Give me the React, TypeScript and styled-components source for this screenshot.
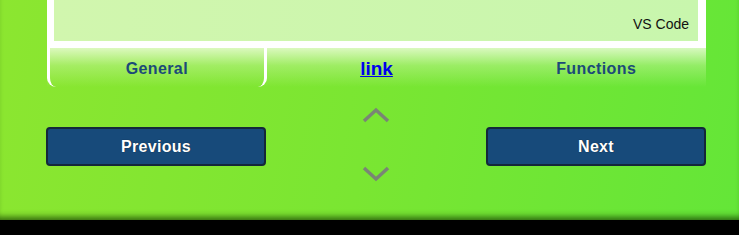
import React from 'react';
import styled, { createGlobalStyle } from 'styled-components';

const GlobalStyle = createGlobalStyle`
  html, body {
    margin: 0;
    padding: 0;
    background: #000;
  }
  body {
    font-family: 'Liberation Sans', Arial, sans-serif;
  }
`;

const tabs = ['General', 'link', 'Functions'];

const Chevron = ({ dir }: { dir: 'up' | 'down' }) => (
  <svg width="28" height="16" viewBox="0 0 28 16">
    <polyline
      points={dir === 'up' ? '2,14 14,3 26,14' : '2,2 14,13 26,2'}
      fill="none"
      stroke="#7a8575"
      strokeWidth="3.5"
    />
  </svg>
);

const App = () => {
  return (
    <>
      <GlobalStyle />
      <StyledPage>
        <StyledContent>
          <StyledPanel>
            <span className="panel-label">VS Code</span>
          </StyledPanel>
          <StyledTabs>
            {tabs.map((tab, index) => (
              <StyledTab key={tab} className={index === 0 ? 'active' : ''}>
                {tab === 'link' ? <a href="#">{tab}</a> : tab}
              </StyledTab>
            ))}
          </StyledTabs>
          <StyledNav>
            <StyledButton>Previous</StyledButton>
            <StyledArrows>
              <Chevron dir="up" />
              <Chevron dir="down" />
            </StyledArrows>
            <StyledButton>Next</StyledButton>
          </StyledNav>
        </StyledContent>
      </StyledPage>
    </>
  );
};

const StyledPage = styled.div`
  height: 220px;
  background: linear-gradient(100deg, #8ce630 0%, #7ae632 50%, #64e638 100%);
  box-shadow: inset 0 -7px 6px -4px rgba(20, 60, 0, 0.75);
`;

const StyledContent = styled.div`
  display: flex;
  flex-direction: column;
  margin: 0 33px 0 47px;
`;

const StyledPanel = styled.div`
  height: 32px;
  border: 7px solid #fff;
  border-top: none;
  border-right-width: 8px;
  background: linear-gradient(90deg, #d1f6ae 0%, #c8f6ad 100%);
  display: flex;
  align-items: flex-end;
  justify-content: flex-end;
  padding: 0 9px 9px 0;
  box-sizing: content-box;

  .panel-label {
    font-size: 14px;
    line-height: 16px;
    color: #111;
  }
`;

const StyledTabs = styled.div`
  display: grid;
  grid-template-columns: repeat(3, 1fr);
  height: 39px;
  background: linear-gradient(
    180deg,
    rgba(235, 252, 215, 0.85) 0%,
    rgba(200, 245, 160, 0.45) 45%,
    rgba(130, 232, 60, 0) 100%
  );
`;

const StyledTab = styled.div`
  display: flex;
  align-items: center;
  justify-content: center;
  padding-top: 2px;
  font-size: 16px;
  font-weight: bold;
  letter-spacing: 0.4px;
  color: #1b4a78;
  border-left: 3px solid transparent;
  border-right: 3px solid transparent;
  border-radius: 0 0 9px 9px;

  &.active {
    border-color: #fff;
  }

  a {
    color: #0000ee;
    font-size: 19px;
    letter-spacing: 0;
    text-decoration: underline;
  }
`;

const StyledNav = styled.div`
  display: grid;
  grid-template-columns: 220px 1fr 220px;
  align-items: center;
  margin: 20px 0 0 -1px;
`;

const StyledButton = styled.button`
  height: 39px;
  background: #174a7a;
  border: 2px solid #14283a;
  border-radius: 4px;
  color: #fff;
  font-family: 'Liberation Sans', Arial, sans-serif;
  font-size: 16px;
  font-weight: bold;
  letter-spacing: 0.3px;
  text-shadow: 0 0 1px #0a1a2a;
  cursor: pointer;
`;

const StyledArrows = styled.div`
  display: flex;
  flex-direction: column;
  align-items: center;
  gap: 43px;
  padding-bottom: 4px;
`;

export default App;
